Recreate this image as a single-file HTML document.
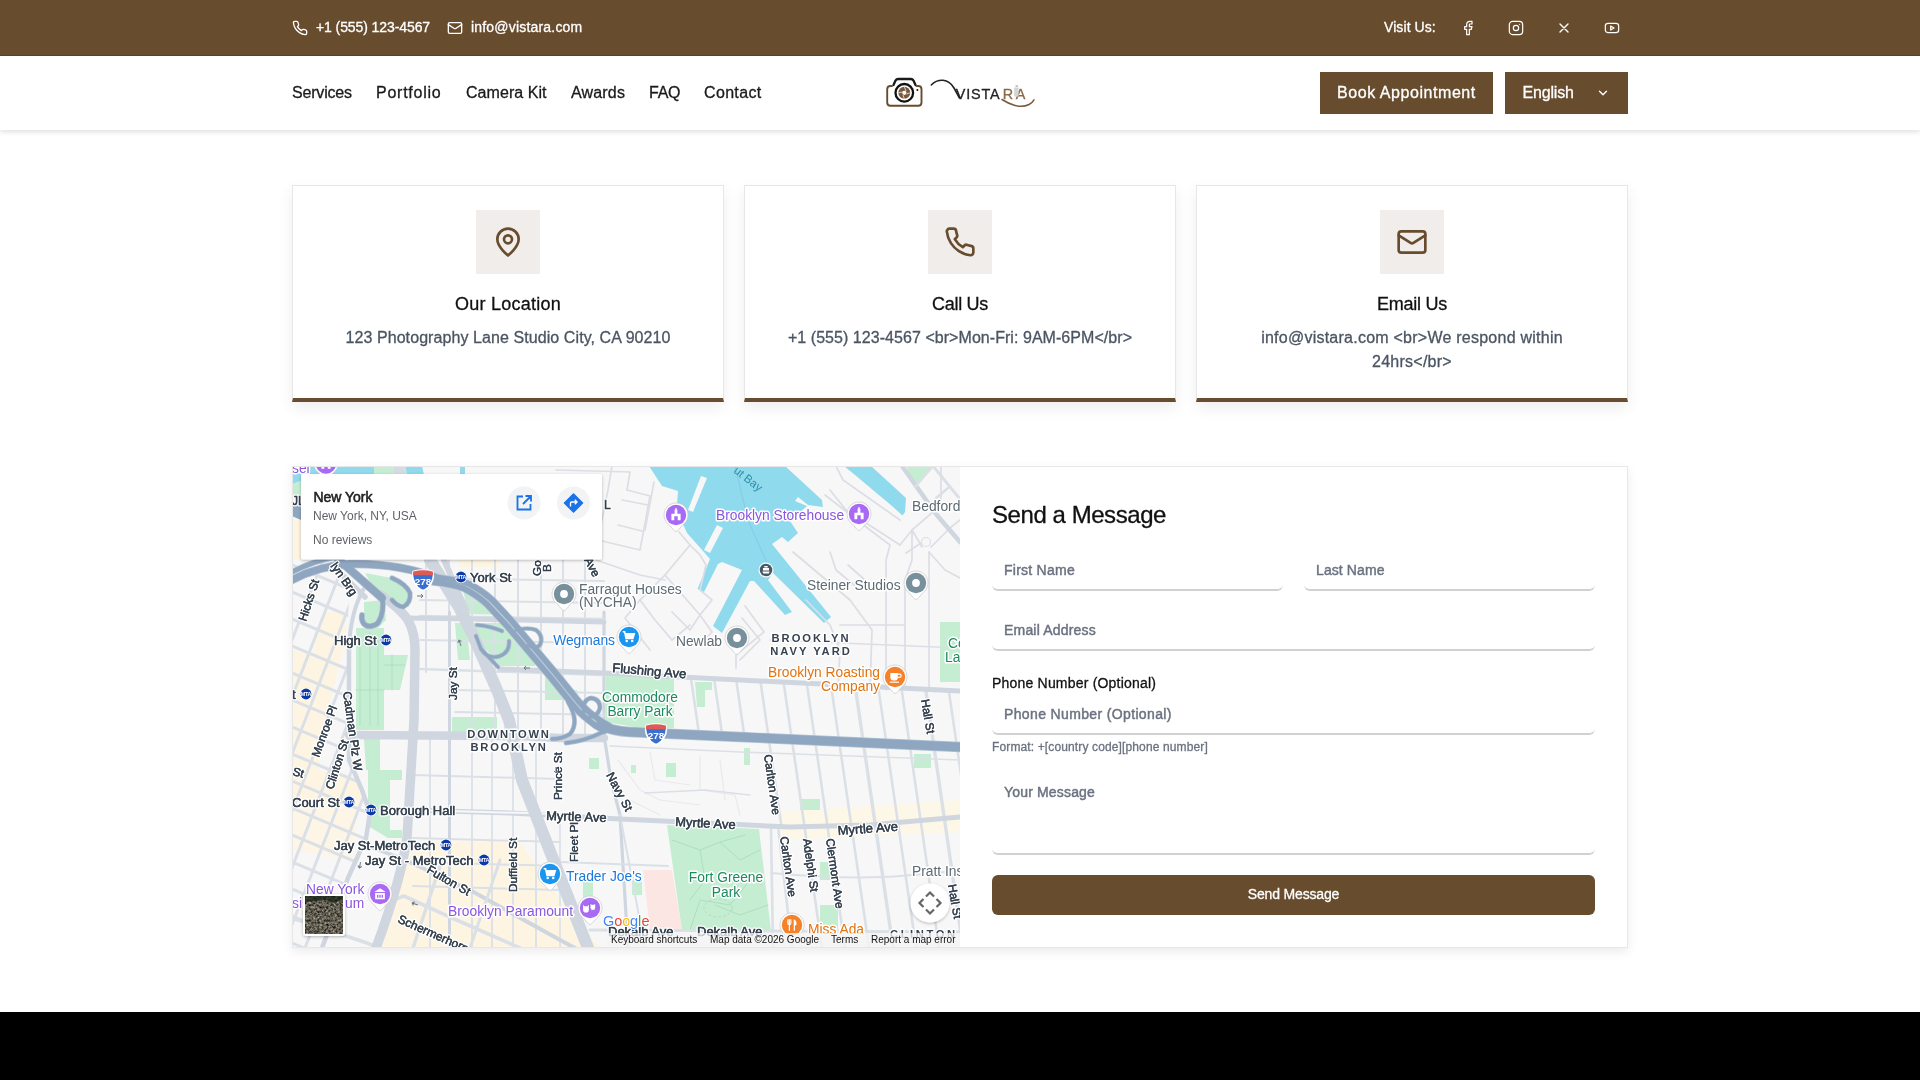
<!DOCTYPE html>
<html lang="en">
<head>
<meta charset="utf-8">
<title>Vistara - Contact</title>
<style>
*{box-sizing:border-box;margin:0;padding:0}
html,body{width:1920px;height:1080px;overflow:hidden;background:#fff}
body{font-family:"Liberation Sans",sans-serif;color:#111;position:relative;will-change:transform}
.abs{position:absolute;white-space:nowrap}
#topbar{position:absolute;left:0;top:0;width:1920px;height:56px;background:#684c2e;border-bottom:1px solid #5c4229;color:#fff;font-size:14px}
#topbar .t{position:absolute;top:0;height:56px;line-height:54px;white-space:nowrap}
#topbar svg{position:absolute}
#nav{position:absolute;left:0;top:56px;width:1920px;height:74px;background:#fff;box-shadow:0 2px 5px rgba(0,0,0,.13)}
#nav a{position:absolute;top:1px;height:74px;line-height:72px;font-size:16px;color:#1a1a1a;text-decoration:none;white-space:nowrap}
.btn{position:absolute;top:16px;height:42px;background:#684c2e;color:#fff;font-size:16px;line-height:42px;white-space:nowrap}
.card{position:absolute;top:185px;width:432px;height:217px;background:#fff;border:1px solid #e7e7e7;border-bottom:4px solid #684c2e;box-shadow:0 6px 14px rgba(0,0,0,.07)}
.card .ib{position:absolute;left:183px;top:24px;width:64px;height:64px;background:#f0edea}
.card .ib svg{position:absolute;left:16px;top:16px}
.card h3{position:absolute;left:0;width:430px;top:106px;text-align:center;font-size:18px;font-weight:400;line-height:24px;color:#111}
.card p{position:absolute;left:30px;width:370px;top:140px;text-align:center;font-size:16px;line-height:24px;color:#4b5563}
#sec{position:absolute;left:292px;top:466px;width:1336px;height:482px;background:#fff;border:1px solid #e7e7e7;box-shadow:0 4px 10px rgba(0,0,0,.08)}
#map{position:absolute;left:293px;top:467px;width:667px;height:480px;overflow:hidden}
#map svg{position:absolute;left:-1px;top:-1px}
#form h2{position:absolute;left:992px;top:499px;font-size:24px;font-weight:400;line-height:32px;color:#111;white-space:nowrap}
.inp{position:absolute;height:40px;margin-top:1px;border-bottom:2px solid #d1d1d1;border-radius:0 0 6px 6px;font-size:14px;font-weight:400;-webkit-text-stroke:.45px #6b7280;color:#6b7280;line-height:38px;padding-left:12px;white-space:nowrap}
#topbar .t,#nav a,.btn,.card h3,.card p,#form h2,#plabel,#phelp,#send{-webkit-text-stroke:.3px}
#footer{position:absolute;left:0;top:1012px;width:1920px;height:68px;background:#000}
</style>
</head>
<body>
<div id="topbar">
  <svg style="left:292px;top:20px" width="16" height="16" viewBox="0 0 24 24" fill="none" stroke="#fff" stroke-width="2" stroke-linecap="round" stroke-linejoin="round"><path d="M22 16.92v3a2 2 0 0 1-2.18 2 19.79 19.79 0 0 1-8.63-3.07 19.5 19.5 0 0 1-6-6 19.79 19.79 0 0 1-3.07-8.67A2 2 0 0 1 4.11 2h3a2 2 0 0 1 2 1.72 12.84 12.84 0 0 0 .7 2.81 2 2 0 0 1-.45 2.11L8.09 9.91a16 16 0 0 0 6 6l1.27-1.27a2 2 0 0 1 2.11-.45 12.84 12.84 0 0 0 2.81.7A2 2 0 0 1 22 16.92z"/></svg>
  <span class="t" id="tphone" style="left:316px;letter-spacing:-.09px">+1 (555) 123-4567</span>
  <svg style="left:447px;top:20px" width="16" height="16" viewBox="0 0 24 24" fill="none" stroke="#fff" stroke-width="2" stroke-linecap="round" stroke-linejoin="round"><rect x="2" y="4" width="20" height="16" rx="2"/><path d="m22 7-8.97 5.7a1.94 1.94 0 0 1-2.06 0L2 7"/></svg>
  <span class="t" id="tmail" style="left:471px;letter-spacing:.19px">info@vistara.com</span>
  <span class="t" id="tvisit" style="left:1384px;letter-spacing:.08px">Visit Us:</span>
  <svg style="left:1460px;top:20px" width="16" height="16" viewBox="0 0 24 24" fill="none" stroke="#fff" stroke-width="1.8" stroke-linecap="round" stroke-linejoin="round"><path d="M18 2h-3a5 5 0 0 0-5 5v3H7v4h3v8h4v-8h3l1-4h-4V7a1 1 0 0 1 1-1h3z"/></svg>
  <svg style="left:1508px;top:20px" width="16" height="16" viewBox="0 0 24 24" fill="none" stroke="#fff" stroke-width="1.8" stroke-linecap="round" stroke-linejoin="round"><rect x="2" y="2" width="20" height="20" rx="5"/><circle cx="12" cy="12" r="4"/><path d="M17.5 6.5h.01"/></svg>
  <svg style="left:1556px;top:20px" width="16" height="16" viewBox="0 0 24 24" fill="none" stroke="#fff" stroke-width="2" stroke-linecap="round" stroke-linejoin="round"><path d="M18 6 6 18M6 6l12 12"/></svg>
  <svg style="left:1604px;top:20px" width="16" height="16" viewBox="0 0 24 24" fill="none" stroke="#fff" stroke-width="1.8" stroke-linecap="round" stroke-linejoin="round"><rect x="2" y="5" width="20" height="14" rx="4"/><path d="m10 9 5 3-5 3z"/></svg>
</div>

<div id="nav">
  <a id="n1" style="left:292px;letter-spacing:-0.18px">Services</a>
  <a id="n2" style="left:376px;letter-spacing:0.75px">Portfolio</a>
  <a id="n3" style="left:466px;letter-spacing:0.05px">Camera Kit</a>
  <a id="n4" style="left:571px;letter-spacing:0.17px">Awards</a>
  <a id="n5" style="left:649px;letter-spacing:-0.25px">FAQ</a>
  <a id="n6" style="left:704px;letter-spacing:0.34px">Contact</a>
  <svg style="position:absolute;left:880px;top:14px" width="160" height="46" viewBox="880 70 160 46" font-family="Liberation Sans, sans-serif">
<path d="M893.5,85 L895.5,80.6 Q896.4,79 898.2,79 H910.8 Q912.6,79 913.5,80.6 L915.5,85" fill="none" stroke="#1a1a1a" stroke-width="2.3" stroke-linecap="round"/>
<path d="M892,86 H890.5 Q887.2,86 887.2,89.3 V102.5 Q887.2,105.8 890.5,105.8 H918.2 Q921.5,105.8 921.5,102.5 V89.3 Q921.5,86 918.2,86 H916.5" fill="none" stroke="#684c2e" stroke-width="1.9" stroke-linecap="round"/>
<circle cx="904.3" cy="92.8" r="8.8" fill="none" stroke="#111" stroke-width="2.3"/>
<circle cx="904.3" cy="92.8" r="6" fill="#7a5a3a"/>
<circle cx="904.3" cy="92.8" r="2.1" fill="#fff"/>
<path d="M904.3,86.8 L906,91 M910.3,92.8 L906.3,94 M904.3,98.8 L903,95 M898.3,92.8 L902.3,92" stroke="#fff" stroke-width=".7"/>
<circle cx="917.4" cy="90" r="1" fill="#111"/>
<path d="M931.3,85 Q936,80 943,80.3 Q950,81 954,88 L959.5,98" fill="none" stroke="#222" stroke-width="1.6" stroke-linecap="round"/>
<text x="955.8" y="98.6" font-size="14.4" fill="#222" stroke="#222" stroke-width=".3" letter-spacing=".8" id="lg1">VISTA</text>
<text x="1002.8" y="98.6" font-size="14.4" fill="#8a6a48" stroke="#8a6a48" stroke-width=".3" id="lg2">R</text>
<text x="1015.8" y="98.6" font-size="14.4" fill="#8a6a48" stroke="#8a6a48" stroke-width=".3" id="lg3">A</text>
<rect x="1014.2" y="87.5" width="4.4" height="9" fill="#d4d4d4"/>
<rect x="1015.5" y="85.2" width="2.6" height="1.6" fill="#bbb"/>
<path d="M1002,99.5 Q1009,104 1015,105.5 Q1023,107.5 1029,104.5 Q1032.5,102.5 1034,99.8" fill="none" stroke="#7a5a3a" stroke-width="1.5" stroke-linecap="round"/>
</svg>

  <div class="btn" id="book" style="left:1320px;width:173px;padding-left:17px;letter-spacing:.56px">Book Appointment</div>
  <div class="btn" id="lang" style="left:1505px;width:123px;padding-left:17.5px;letter-spacing:-.18px">English
    <svg style="position:absolute;left:91px;top:14px" width="14" height="14" viewBox="0 0 24 24" fill="none" stroke="#fff" stroke-width="2.4" stroke-linecap="round" stroke-linejoin="round"><path d="m6 9 6 6 6-6"/></svg>
  </div>
</div>

<div class="card" style="left:292px">
  <div class="ib"><svg width="32" height="32" viewBox="0 0 24 24" fill="none" stroke="#684c2e" stroke-width="2" stroke-linecap="round" stroke-linejoin="round"><path d="M20 10c0 6-8 12-8 12s-8-6-8-12a8 8 0 0 1 16 0Z"/><circle cx="12" cy="10" r="3"/></svg></div>
  <h3 style="letter-spacing:.23px">Our Location</h3>
  <p style="letter-spacing:.08px">123 Photography Lane Studio City, CA 90210</p>
</div>
<div class="card" style="left:744px">
  <div class="ib"><svg width="32" height="32" viewBox="0 0 24 24" fill="none" stroke="#684c2e" stroke-width="2" stroke-linecap="round" stroke-linejoin="round"><path d="M22 16.92v3a2 2 0 0 1-2.18 2 19.79 19.79 0 0 1-8.63-3.07 19.5 19.5 0 0 1-6-6 19.79 19.79 0 0 1-3.07-8.67A2 2 0 0 1 4.11 2h3a2 2 0 0 1 2 1.72 12.84 12.84 0 0 0 .7 2.81 2 2 0 0 1-.45 2.11L8.09 9.91a16 16 0 0 0 6 6l1.27-1.27a2 2 0 0 1 2.11-.45 12.84 12.84 0 0 0 2.81.7A2 2 0 0 1 22 16.92z"/></svg></div>
  <h3 style="letter-spacing:-.28px">Call Us</h3>
  <p style="letter-spacing:.05px">+1 (555) 123-4567 &lt;br&gt;Mon-Fri: 9AM-6PM&lt;/br&gt;</p>
</div>
<div class="card" style="left:1196px">
  <div class="ib"><svg width="32" height="32" viewBox="0 0 24 24" fill="none" stroke="#684c2e" stroke-width="2" stroke-linecap="round" stroke-linejoin="round"><rect x="2" y="4" width="20" height="16" rx="2"/><path d="m22 7-8.97 5.7a1.94 1.94 0 0 1-2.06 0L2 7"/></svg></div>
  <h3 style="letter-spacing:-.22px">Email Us</h3>
  <p style="left:40px;width:350px;letter-spacing:.24px">info@vistara.com &lt;br&gt;We respond within 24hrs&lt;/br&gt;</p>
</div>

<div id="sec"></div>
<div id="map">
<svg width="668" height="482" viewBox="292 466 668 482" font-family="Liberation Sans, sans-serif">
<rect x="292" y="466" width="668" height="482" fill="#f8f7f7"/>
<polygon points="324.0,612.0 346.0,612.0 346.0,640.0 330.0,700.0 318.0,770.0 360.0,780.0 362.0,800.0 292.0,800.0 292.0,650.0 312.0,655.0" fill="#fdf5e2" />
<polygon points="292.0,800.0 360.0,800.0 352.0,860.0 292.0,850.0" fill="#fdf6e6" />
<polygon points="420.0,842.0 520.0,842.0 560.0,900.0 600.0,948.0 380.0,948.0 395.0,900.0 412.0,850.0" fill="#fdf5e2" />
<polygon points="778.0,812.0 960.0,800.0 960.0,832.0 782.0,840.0" fill="#fdf7e8" />
<polygon points="459.0,560.0 499.0,560.0 499.0,567.0 459.0,567.0" fill="#fdf5e2" />
<polygon points="292.0,520.0 301.0,520.0 301.0,560.0 292.0,560.0" fill="#fdf5e2" />
<polygon points="356.0,628.0 384.0,628.0 384.0,655.0 408.0,655.0 400.0,690.0 384.0,690.0 384.0,730.0 356.0,730.0" fill="#c5edd2" />
<polygon points="364.0,739.0 380.0,739.0 380.0,770.0 366.0,770.0" fill="#c5edd2" />
<polygon points="368.0,770.0 402.0,770.0 402.0,838.0 388.0,838.0 368.0,826.0" fill="#c5edd2" />
<polygon points="390.0,780.0 402.0,780.0 402.0,830.0 390.0,830.0" fill="#f8f7f7" />
<polygon points="365.0,573.0 392.0,578.0 409.0,590.0 409.0,607.0 385.0,597.0 370.0,582.0" fill="#c5edd2" />
<polygon points="364.0,602.0 384.0,600.0 386.0,620.0 378.0,628.0 364.0,628.0" fill="#c5edd2" />
<polygon points="462.0,585.0 480.0,590.0 508.0,615.0 468.0,614.0" fill="#c5edd2" />
<polygon points="472.0,623.0 512.0,623.0 535.0,650.0 535.0,666.0 500.0,666.0 478.0,640.0" fill="#c5edd2" />
<polygon points="455.0,623.0 466.0,623.0 470.0,660.0 458.0,660.0" fill="#c5edd2" />
<polygon points="452.0,717.0 497.0,717.0 497.0,732.0 452.0,732.0" fill="#c5edd2" />
<polygon points="545.0,672.0 560.0,672.0 560.0,690.0 577.0,690.0 577.0,700.0 545.0,700.0" fill="#c5edd2" />
<polygon points="606.0,675.0 674.0,678.0 674.0,728.0 640.0,728.0 606.0,722.0" fill="#c5edd2" />
<polygon points="695.0,682.0 712.0,682.0 712.0,690.0 705.0,690.0 705.0,707.0 697.0,707.0" fill="#c5edd2" />
<polygon points="667.0,825.0 759.0,829.0 771.0,931.0 682.0,931.0" fill="#c5edd2" />
<polyline points="672.0,840.0 700.0,850.0 720.0,842.0 740.0,860.0 760.0,850.0" fill="none" stroke="#a9dcbc" stroke-width="0.9" stroke-linecap="round" stroke-linejoin="round" />
<polyline points="690.0,930.0 700.0,900.0 730.0,905.0 750.0,880.0 762.0,885.0" fill="none" stroke="#a9dcbc" stroke-width="0.9" stroke-linecap="round" stroke-linejoin="round" />
<polyline points="700.0,850.0 705.0,880.0 690.0,900.0" fill="none" stroke="#a9dcbc" stroke-width="0.9" stroke-linecap="round" stroke-linejoin="round" />
<polyline points="720.0,842.0 745.0,835.0" fill="none" stroke="#a9dcbc" stroke-width="0.9" stroke-linecap="round" stroke-linejoin="round" />
<polyline points="715.0,905.0 740.0,915.0 768.0,905.0" fill="none" stroke="#a9dcbc" stroke-width="0.9" stroke-linecap="round" stroke-linejoin="round" />
<ellipse cx="718" cy="908" rx="14" ry="9" fill="none" stroke="#a9dcbc" stroke-width=".9" stroke-dasharray="3 2"/>
<polyline points="360.0,640.0 360.0,725.0" fill="none" stroke="#a9dcbc" stroke-width="0.8" stroke-linecap="round" stroke-linejoin="round" />
<polyline points="370.0,632.0 370.0,725.0" fill="none" stroke="#a9dcbc" stroke-width="0.8" stroke-linecap="round" stroke-linejoin="round" />
<polyline points="378.0,640.0 378.0,725.0" fill="none" stroke="#a9dcbc" stroke-width="0.8" stroke-linecap="round" stroke-linejoin="round" />
<polyline points="356.0,690.0 384.0,690.0" fill="none" stroke="#a9dcbc" stroke-width="0.8" stroke-linecap="round" stroke-linejoin="round" />
<polyline points="384.0,665.0 405.0,665.0" fill="none" stroke="#a9dcbc" stroke-width="0.8" stroke-linecap="round" stroke-linejoin="round" />
<polyline points="392.0,655.0 392.0,690.0" fill="none" stroke="#a9dcbc" stroke-width="0.8" stroke-linecap="round" stroke-linejoin="round" />
<rect x="589" y="758" width="10" height="11" fill="#c5edd2"/>
<rect x="631" y="765" width="5" height="8" fill="#c5edd2"/>
<rect x="666" y="763" width="10" height="14" fill="#c5edd2"/>
<rect x="744" y="748" width="6" height="17" fill="#c5edd2"/>
<rect x="800" y="799" width="20" height="11" fill="#c5edd2"/>
<rect x="914" y="754" width="17" height="14" fill="#c5edd2"/>
<rect x="632" y="877" width="10" height="18" fill="#c5edd2"/>
<rect x="820" y="862" width="12" height="18" fill="#c5edd2"/>
<rect x="820" y="905" width="18" height="25" fill="#c5edd2"/>
<rect x="583" y="880" width="10" height="30" fill="#c5edd2"/>
<rect x="940" y="622" width="20" height="60" fill="#c5edd2"/>
<polygon points="906.0,466.0 933.0,466.0 915.0,487.0" fill="#c5edd2" />
<polygon points="643.0,870.0 672.0,870.0 682.0,930.0 650.0,930.0" fill="#fbe6e3" />
<polygon points="292.0,466.0 374.0,466.0 374.0,475.0 292.0,475.0" fill="#90daee" />
<polygon points="405.0,466.0 422.0,466.0 424.0,475.0 407.0,475.0" fill="#90daee" />
<polygon points="460.0,466.0 465.0,466.0 465.0,475.0 460.0,475.0" fill="#90daee" />
<polygon points="292.0,475.0 301.0,475.0 301.0,481.0 292.0,484.0" fill="#90daee" />
<polygon points="374.0,466.0 392.0,466.0 394.0,475.0 374.0,475.0" fill="#c5edd2" />
<polygon points="392.0,466.0 405.0,466.0 407.0,475.0 394.0,475.0" fill="#d5dbe2" />
<polygon points="292.0,484.0 301.0,481.0 301.0,497.0 292.0,497.0" fill="#c5edd2" />
<polygon points="292.0,506.0 301.0,503.0 301.0,520.0 292.0,516.0" fill="#8fa6c0" />
<polygon points="649.0,466.0 662.0,486.0 678.0,491.0 677.0,504.0 682.0,522.0 687.0,533.0 703.0,551.0 710.0,559.0 697.5,589.0 704.0,592.0 718.0,564.0 722.0,562.0 742.0,570.0 713.0,626.0 722.0,633.0 750.0,581.0 754.0,581.0 785.0,615.0 792.0,612.0 768.0,580.0 773.0,573.0 824.0,623.0 831.0,617.0 772.0,544.0 782.0,537.0 788.0,542.0 798.0,533.0 790.0,521.0 807.0,506.0 795.0,501.0 798.0,497.0 808.0,505.0 823.0,507.0 822.0,500.0 785.0,466.0" fill="#90daee" />
<polygon points="701.0,476.0 707.0,478.0 693.0,512.0 688.0,510.0" fill="#f8f7f7" />
<polygon points="717.0,525.0 723.0,528.0 710.0,553.0 704.0,550.0" fill="#f8f7f7" />
<polygon points="844.0,466.0 871.0,466.0 906.0,498.0 905.0,512.0 902.5,515.5 892.0,506.0 855.0,475.0" fill="#90daee" />
<polyline points="735.0,466.0 748.0,520.0 770.0,570.0" fill="none" stroke="#6fbfd6" stroke-width="0.5" stroke-linecap="round" stroke-linejoin="round" />
<polyline points="612.0,466.0 608.0,490.0 600.0,530.0 596.0,560.0 640.0,575.0 665.0,580.0" fill="none" stroke="#dcdee5" stroke-width="1.7" stroke-linecap="round" stroke-linejoin="round" />
<polyline points="556.0,470.0 630.0,472.0 627.0,490.0" fill="none" stroke="#dcdee5" stroke-width="1.7" stroke-linecap="round" stroke-linejoin="round" />
<polyline points="627.0,490.0 650.0,496.0 640.0,550.0 598.0,540.0" fill="none" stroke="#dcdee5" stroke-width="1.7" stroke-linecap="round" stroke-linejoin="round" />
<polyline points="654.0,482.0 645.0,530.0" fill="none" stroke="#dcdee5" stroke-width="1.7" stroke-linecap="round" stroke-linejoin="round" />
<polyline points="622.0,500.0 648.0,505.0" fill="none" stroke="#dcdee5" stroke-width="1.7" stroke-linecap="round" stroke-linejoin="round" />
<polyline points="618.0,525.0 642.0,531.0" fill="none" stroke="#dcdee5" stroke-width="1.7" stroke-linecap="round" stroke-linejoin="round" />
<polyline points="679.0,532.0 690.0,545.0 700.0,555.0 706.0,565.0 700.0,590.0 712.0,600.0 700.0,615.0" fill="none" stroke="#dcdee5" stroke-width="1.7" stroke-linecap="round" stroke-linejoin="round" />
<polyline points="690.0,545.0 665.0,575.0 640.0,600.0 655.0,620.0 672.0,640.0" fill="none" stroke="#dcdee5" stroke-width="1.7" stroke-linecap="round" stroke-linejoin="round" />
<polyline points="665.0,575.0 700.0,615.0 690.0,630.0 672.0,612.0" fill="none" stroke="#dcdee5" stroke-width="1.7" stroke-linecap="round" stroke-linejoin="round" />
<polyline points="700.0,615.0 712.0,632.0 700.0,645.0" fill="none" stroke="#dcdee5" stroke-width="1.7" stroke-linecap="round" stroke-linejoin="round" />
<polyline points="640.0,600.0 625.0,618.0 650.0,650.0" fill="none" stroke="#dcdee5" stroke-width="1.7" stroke-linecap="round" stroke-linejoin="round" />
<polyline points="672.0,640.0 690.0,625.0" fill="none" stroke="#dcdee5" stroke-width="1.7" stroke-linecap="round" stroke-linejoin="round" />
<polyline points="740.0,660.0 760.0,640.0 742.0,618.0" fill="none" stroke="#dcdee5" stroke-width="1.7" stroke-linecap="round" stroke-linejoin="round" />
<polyline points="736.0,668.0 736.0,655.0 764.0,632.0 745.0,606.0" fill="none" stroke="#dcdee5" stroke-width="1.7" stroke-linecap="round" stroke-linejoin="round" />
<polyline points="830.0,490.0 846.0,510.0 900.0,545.0 912.0,530.0 941.0,505.0 941.0,466.0" fill="none" stroke="#dcdee5" stroke-width="1.7" stroke-linecap="round" stroke-linejoin="round" />
<polyline points="825.0,495.0 870.0,530.0 890.0,545.0 886.0,560.0 886.0,690.0" fill="none" stroke="#dcdee5" stroke-width="1.7" stroke-linecap="round" stroke-linejoin="round" />
<polyline points="793.0,552.0 850.0,600.0 872.0,630.0 870.0,690.0" fill="none" stroke="#dcdee5" stroke-width="1.7" stroke-linecap="round" stroke-linejoin="round" />
<polyline points="806.0,600.0 830.0,625.0 840.0,650.0 838.0,690.0" fill="none" stroke="#dcdee5" stroke-width="1.7" stroke-linecap="round" stroke-linejoin="round" />
<polyline points="830.0,552.0 836.0,570.0 860.0,590.0" fill="none" stroke="#dcdee5" stroke-width="1.7" stroke-linecap="round" stroke-linejoin="round" />
<polyline points="848.0,565.0 865.0,580.0" fill="none" stroke="#dcdee5" stroke-width="1.7" stroke-linecap="round" stroke-linejoin="round" />
<polyline points="912.0,530.0 912.0,560.0 905.0,580.0 905.0,690.0" fill="none" stroke="#dcdee5" stroke-width="1.7" stroke-linecap="round" stroke-linejoin="round" />
<polyline points="912.0,530.0 918.0,540.0 922.0,547.0" fill="none" stroke="#dcdee5" stroke-width="1.7" stroke-linecap="round" stroke-linejoin="round" />
<polyline points="931.0,547.0 950.0,528.0 960.0,520.0" fill="none" stroke="#dcdee5" stroke-width="1.7" stroke-linecap="round" stroke-linejoin="round" />
<polyline points="929.0,690.0 929.0,552.0" fill="none" stroke="#dcdee5" stroke-width="1.7" stroke-linecap="round" stroke-linejoin="round" />
<polyline points="906.0,553.0 921.0,543.0" fill="none" stroke="#dcdee5" stroke-width="1.7" stroke-linecap="round" stroke-linejoin="round" />
<polyline points="929.0,552.0 945.0,570.0 960.0,578.0" fill="none" stroke="#dcdee5" stroke-width="1.7" stroke-linecap="round" stroke-linejoin="round" />
<polyline points="836.0,466.0 843.0,480.0 900.0,520.0" fill="none" stroke="#dcdee5" stroke-width="1.7" stroke-linecap="round" stroke-linejoin="round" />
<polyline points="770.0,640.0 960.0,648.0" fill="none" stroke="#dcdee5" stroke-width="1.7" stroke-linecap="round" stroke-linejoin="round" />
<polyline points="840.0,625.0 905.0,625.0" fill="none" stroke="#dcdee5" stroke-width="1.7" stroke-linecap="round" stroke-linejoin="round" />
<circle cx="926" cy="542" r="4.5" fill="#f8f7f7" stroke="#dcdee5" stroke-width="1.1"/>
<polyline points="902.0,466.0 936.0,514.0 960.0,542.0" fill="none" stroke="#cfd6df" stroke-width="4.5" stroke-linecap="round" stroke-linejoin="round" />
<polyline points="933.0,466.0 960.0,499.0" fill="none" stroke="#dbe0e7" stroke-width="3" stroke-linecap="round" stroke-linejoin="round" />
<polyline points="915.0,487.0 933.0,466.0" fill="none" stroke="#dbe0e7" stroke-width="2.5" stroke-linecap="round" stroke-linejoin="round" />
<polyline points="935.0,499.0 948.0,488.0" fill="none" stroke="#dbe0e7" stroke-width="2.5" stroke-linecap="round" stroke-linejoin="round" />
<polyline points="691.2,679.7 699.2,735.0" fill="none" stroke="#dbe0e7" stroke-width="2.6" stroke-linecap="round" stroke-linejoin="round" />
<polyline points="714.4,680.7 722.2,735.0" fill="none" stroke="#dbe0e7" stroke-width="2.6" stroke-linecap="round" stroke-linejoin="round" />
<polyline points="736.5,681.7 744.2,735.0" fill="none" stroke="#dbe0e7" stroke-width="2.6" stroke-linecap="round" stroke-linejoin="round" />
<polyline points="760.7,682.8 781.7,828.0" fill="none" stroke="#dbe0e7" stroke-width="2.6" stroke-linecap="round" stroke-linejoin="round" />
<polyline points="771.0,828.0 773.0,948.0" fill="none" stroke="#dbe0e7" stroke-width="2.6" stroke-linecap="round" stroke-linejoin="round" />
<polyline points="783.8,683.8 822.1,948.0" fill="none" stroke="#dbe0e7" stroke-width="2.6" stroke-linecap="round" stroke-linejoin="round" />
<polyline points="807.0,684.9 845.1,948.0" fill="none" stroke="#dbe0e7" stroke-width="2.6" stroke-linecap="round" stroke-linejoin="round" />
<polyline points="831.1,685.9 869.1,948.0" fill="none" stroke="#dbe0e7" stroke-width="2.6" stroke-linecap="round" stroke-linejoin="round" />
<polyline points="855.3,687.0 893.1,948.0" fill="none" stroke="#dbe0e7" stroke-width="3.4" stroke-linecap="round" stroke-linejoin="round" />
<polyline points="878.4,688.1 916.1,948.0" fill="none" stroke="#dbe0e7" stroke-width="2.6" stroke-linecap="round" stroke-linejoin="round" />
<polyline points="901.6,689.1 939.1,948.0" fill="none" stroke="#dbe0e7" stroke-width="2.6" stroke-linecap="round" stroke-linejoin="round" />
<polyline points="925.8,690.2 963.1,948.0" fill="none" stroke="#dbe0e7" stroke-width="3.4" stroke-linecap="round" stroke-linejoin="round" />
<polyline points="948.9,691.2 986.1,948.0" fill="none" stroke="#dbe0e7" stroke-width="2.6" stroke-linecap="round" stroke-linejoin="round" />
<polyline points="792.0,948.0 778.5,830.0" fill="none" stroke="#dbe0e7" stroke-width="2.6" stroke-linecap="round" stroke-linejoin="round" />
<path d="M771,873 Q850,880 900,876 T960,870" fill="none" stroke="#dbe0e7" stroke-width="2" stroke-linecap="round" stroke-linejoin="round" />
<polyline points="590.0,930.0 960.0,932.0" fill="none" stroke="#dbe0e7" stroke-width="3" stroke-linecap="round" stroke-linejoin="round" />
<polyline points="610.0,746.0 740.0,752.0 960.0,760.0" fill="none" stroke="#dbe0e7" stroke-width="1.6" stroke-linecap="round" stroke-linejoin="round" />
<polyline points="618.0,760.0 640.0,790.0 660.0,800.0 700.0,805.0" fill="none" stroke="#e9e9ee" stroke-width="1.2" stroke-linecap="round" stroke-linejoin="round" />
<polyline points="700.0,756.0 700.0,790.0 735.0,795.0 740.0,815.0" fill="none" stroke="#e9e9ee" stroke-width="1.2" stroke-linecap="round" stroke-linejoin="round" />
<polyline points="650.0,752.0 655.0,780.0 690.0,785.0" fill="none" stroke="#e9e9ee" stroke-width="1.2" stroke-linecap="round" stroke-linejoin="round" />
<polyline points="720.0,760.0 725.0,800.0" fill="none" stroke="#e9e9ee" stroke-width="1.2" stroke-linecap="round" stroke-linejoin="round" />
<polyline points="630.0,800.0 660.0,815.0" fill="none" stroke="#e9e9ee" stroke-width="1.2" stroke-linecap="round" stroke-linejoin="round" />
<polyline points="645.0,793.0 705.0,790.0 750.0,795.0" fill="none" stroke="#dbe0e7" stroke-width="1.6" stroke-linecap="round" stroke-linejoin="round" />
<polyline points="604.0,612.0 604.0,735.0 611.0,780.0 620.0,815.0 628.0,948.0" fill="none" stroke="#cfd6df" stroke-width="3.2" stroke-linecap="round" stroke-linejoin="round" />
<polyline points="620.0,815.0 645.0,948.0" fill="none" stroke="#dbe0e7" stroke-width="2" stroke-linecap="round" stroke-linejoin="round" />
<polyline points="560.0,862.0 668.0,866.0" fill="none" stroke="#dbe0e7" stroke-width="2" stroke-linecap="round" stroke-linejoin="round" />
<polyline points="560.0,817.0 560.0,948.0" fill="none" stroke="#dbe0e7" stroke-width="1.6" stroke-linecap="round" stroke-linejoin="round" />
<polyline points="420.0,578.0 604.0,581.0" fill="none" stroke="#dbe0e7" stroke-width="2" stroke-linecap="round" stroke-linejoin="round" />
<polyline points="420.0,600.0 604.0,603.0" fill="none" stroke="#dbe0e7" stroke-width="2" stroke-linecap="round" stroke-linejoin="round" />
<polyline points="420.0,616.0 604.0,619.0" fill="none" stroke="#dbe0e7" stroke-width="2.4" stroke-linecap="round" stroke-linejoin="round" />
<polyline points="420.0,640.0 604.0,643.0" fill="none" stroke="#dbe0e7" stroke-width="2" stroke-linecap="round" stroke-linejoin="round" />
<polyline points="420.0,669.0 604.0,675.0" fill="none" stroke="#dbe0e7" stroke-width="2.4" stroke-linecap="round" stroke-linejoin="round" />
<polyline points="426.0,560.0 426.0,672.0" fill="none" stroke="#dbe0e7" stroke-width="2" stroke-linecap="round" stroke-linejoin="round" />
<polyline points="449.0,560.0 449.0,672.0" fill="none" stroke="#dbe0e7" stroke-width="2" stroke-linecap="round" stroke-linejoin="round" />
<polyline points="472.0,560.0 472.0,672.0" fill="none" stroke="#dbe0e7" stroke-width="2" stroke-linecap="round" stroke-linejoin="round" />
<polyline points="495.0,560.0 495.0,672.0" fill="none" stroke="#dbe0e7" stroke-width="2" stroke-linecap="round" stroke-linejoin="round" />
<polyline points="518.0,560.0 518.0,672.0" fill="none" stroke="#dbe0e7" stroke-width="2" stroke-linecap="round" stroke-linejoin="round" />
<polyline points="541.0,560.0 541.0,672.0" fill="none" stroke="#dbe0e7" stroke-width="2" stroke-linecap="round" stroke-linejoin="round" />
<polyline points="563.0,560.0 563.0,672.0" fill="none" stroke="#dbe0e7" stroke-width="2" stroke-linecap="round" stroke-linejoin="round" />
<polyline points="585.0,560.0 585.0,672.0" fill="none" stroke="#dbe0e7" stroke-width="2" stroke-linecap="round" stroke-linejoin="round" />
<polyline points="455.0,690.0 604.0,693.0" fill="none" stroke="#dbe0e7" stroke-width="2" stroke-linecap="round" stroke-linejoin="round" />
<polyline points="455.0,712.0 604.0,715.0" fill="none" stroke="#dbe0e7" stroke-width="2" stroke-linecap="round" stroke-linejoin="round" />
<polyline points="472.0,672.0 472.0,735.0" fill="none" stroke="#dbe0e7" stroke-width="2" stroke-linecap="round" stroke-linejoin="round" />
<polyline points="495.0,672.0 495.0,735.0" fill="none" stroke="#dbe0e7" stroke-width="2" stroke-linecap="round" stroke-linejoin="round" />
<polyline points="518.0,672.0 518.0,735.0" fill="none" stroke="#dbe0e7" stroke-width="2" stroke-linecap="round" stroke-linejoin="round" />
<polyline points="541.0,672.0 541.0,735.0" fill="none" stroke="#dbe0e7" stroke-width="2" stroke-linecap="round" stroke-linejoin="round" />
<polyline points="563.0,672.0 563.0,735.0" fill="none" stroke="#dbe0e7" stroke-width="2" stroke-linecap="round" stroke-linejoin="round" />
<polyline points="585.0,672.0 585.0,735.0" fill="none" stroke="#dbe0e7" stroke-width="2" stroke-linecap="round" stroke-linejoin="round" />
<polyline points="413.0,775.0 560.0,779.0" fill="none" stroke="#dbe0e7" stroke-width="2" stroke-linecap="round" stroke-linejoin="round" />
<polyline points="413.0,810.0 560.0,814.0" fill="none" stroke="#dbe0e7" stroke-width="2" stroke-linecap="round" stroke-linejoin="round" />
<polyline points="413.0,838.0 560.0,842.0" fill="none" stroke="#dbe0e7" stroke-width="2" stroke-linecap="round" stroke-linejoin="round" />
<polyline points="413.0,862.0 560.0,866.0" fill="none" stroke="#dbe0e7" stroke-width="2" stroke-linecap="round" stroke-linejoin="round" />
<polyline points="413.0,886.0 560.0,890.0" fill="none" stroke="#dbe0e7" stroke-width="2" stroke-linecap="round" stroke-linejoin="round" />
<polyline points="430.0,738.0 430.0,948.0" fill="none" stroke="#dbe0e7" stroke-width="1.8" stroke-linecap="round" stroke-linejoin="round" />
<polyline points="472.0,738.0 472.0,948.0" fill="none" stroke="#dbe0e7" stroke-width="1.8" stroke-linecap="round" stroke-linejoin="round" />
<polyline points="492.0,738.0 492.0,948.0" fill="none" stroke="#dbe0e7" stroke-width="1.8" stroke-linecap="round" stroke-linejoin="round" />
<polyline points="513.0,738.0 513.0,948.0" fill="none" stroke="#dbe0e7" stroke-width="1.8" stroke-linecap="round" stroke-linejoin="round" />
<polyline points="536.0,738.0 536.0,948.0" fill="none" stroke="#dbe0e7" stroke-width="1.8" stroke-linecap="round" stroke-linejoin="round" />
<polyline points="449.5,612.0 449.5,948.0" fill="none" stroke="#cfd6df" stroke-width="3" stroke-linecap="round" stroke-linejoin="round" />
<defs><clipPath id="bh"><polygon points="292,560 330,560 338,572 349,600 347,640 347,760 364,800 366,840 340,900 325,948 292,948"/></clipPath></defs>
<g clip-path="url(#bh)">
<polyline points="292.0,484.0 392.0,526.0" fill="none" stroke="#dbe0e7" stroke-width="3" stroke-linecap="round" stroke-linejoin="round" />
<polyline points="292.0,511.0 392.0,553.0" fill="none" stroke="#dbe0e7" stroke-width="3" stroke-linecap="round" stroke-linejoin="round" />
<polyline points="292.0,538.0 392.0,580.0" fill="none" stroke="#dbe0e7" stroke-width="3" stroke-linecap="round" stroke-linejoin="round" />
<polyline points="292.0,565.0 392.0,607.0" fill="none" stroke="#dbe0e7" stroke-width="3" stroke-linecap="round" stroke-linejoin="round" />
<polyline points="292.0,592.0 392.0,634.0" fill="none" stroke="#dbe0e7" stroke-width="3" stroke-linecap="round" stroke-linejoin="round" />
<polyline points="292.0,619.0 392.0,661.0" fill="none" stroke="#dbe0e7" stroke-width="3" stroke-linecap="round" stroke-linejoin="round" />
<polyline points="292.0,646.0 392.0,688.0" fill="none" stroke="#dbe0e7" stroke-width="3" stroke-linecap="round" stroke-linejoin="round" />
<polyline points="292.0,673.0 392.0,715.0" fill="none" stroke="#dbe0e7" stroke-width="3" stroke-linecap="round" stroke-linejoin="round" />
<polyline points="292.0,700.0 392.0,742.0" fill="none" stroke="#dbe0e7" stroke-width="3" stroke-linecap="round" stroke-linejoin="round" />
<polyline points="292.0,727.0 392.0,769.0" fill="none" stroke="#dbe0e7" stroke-width="3" stroke-linecap="round" stroke-linejoin="round" />
<polyline points="292.0,754.0 392.0,796.0" fill="none" stroke="#dbe0e7" stroke-width="3" stroke-linecap="round" stroke-linejoin="round" />
<polyline points="292.0,781.0 392.0,823.0" fill="none" stroke="#dbe0e7" stroke-width="3" stroke-linecap="round" stroke-linejoin="round" />
<polyline points="292.0,808.0 392.0,850.0" fill="none" stroke="#dbe0e7" stroke-width="3" stroke-linecap="round" stroke-linejoin="round" />
<polyline points="292.0,835.0 392.0,877.0" fill="none" stroke="#dbe0e7" stroke-width="3" stroke-linecap="round" stroke-linejoin="round" />
<polyline points="292.0,862.0 392.0,904.0" fill="none" stroke="#dbe0e7" stroke-width="3" stroke-linecap="round" stroke-linejoin="round" />
<polyline points="292.0,889.0 392.0,931.0" fill="none" stroke="#dbe0e7" stroke-width="3" stroke-linecap="round" stroke-linejoin="round" />
<polyline points="292.0,916.0 392.0,958.0" fill="none" stroke="#dbe0e7" stroke-width="3" stroke-linecap="round" stroke-linejoin="round" />
<polyline points="292.0,943.0 392.0,985.0" fill="none" stroke="#dbe0e7" stroke-width="3" stroke-linecap="round" stroke-linejoin="round" />
<polyline points="292.0,970.0 392.0,1012.0" fill="none" stroke="#dbe0e7" stroke-width="3" stroke-linecap="round" stroke-linejoin="round" />
<polyline points="292.0,997.0 392.0,1039.0" fill="none" stroke="#dbe0e7" stroke-width="3" stroke-linecap="round" stroke-linejoin="round" />
<polyline points="292.0,1024.0 392.0,1066.0" fill="none" stroke="#dbe0e7" stroke-width="3" stroke-linecap="round" stroke-linejoin="round" />
<polyline points="323.0,560.0 173.0,948.0" fill="none" stroke="#dbe0e7" stroke-width="3" stroke-linecap="round" stroke-linejoin="round" />
<polyline points="345.0,560.0 195.0,948.0" fill="none" stroke="#dbe0e7" stroke-width="3" stroke-linecap="round" stroke-linejoin="round" />
<polyline points="367.0,560.0 217.0,948.0" fill="none" stroke="#dbe0e7" stroke-width="3" stroke-linecap="round" stroke-linejoin="round" />
<polyline points="389.0,560.0 239.0,948.0" fill="none" stroke="#dbe0e7" stroke-width="3" stroke-linecap="round" stroke-linejoin="round" />
<polyline points="411.0,560.0 261.0,948.0" fill="none" stroke="#dbe0e7" stroke-width="3" stroke-linecap="round" stroke-linejoin="round" />
<polyline points="433.0,560.0 283.0,948.0" fill="none" stroke="#dbe0e7" stroke-width="3" stroke-linecap="round" stroke-linejoin="round" />
<polyline points="455.0,560.0 305.0,948.0" fill="none" stroke="#dbe0e7" stroke-width="3" stroke-linecap="round" stroke-linejoin="round" />
</g>
<polyline points="366.0,845.0 405.0,860.0 470.0,890.0 560.0,940.0 575.0,948.0" fill="none" stroke="#cfd6df" stroke-width="4" stroke-linecap="round" stroke-linejoin="round" />
<polyline points="380.0,905.0 404.0,896.0 452.0,918.0 520.0,948.0" fill="none" stroke="#dbe0e7" stroke-width="3.6" stroke-linecap="round" stroke-linejoin="round" />
<polyline points="292.0,918.0 367.0,943.0 380.0,948.0" fill="none" stroke="#dbe0e7" stroke-width="3.6" stroke-linecap="round" stroke-linejoin="round" />
<polyline points="442.0,860.0 413.0,948.0" fill="none" stroke="#dbe0e7" stroke-width="3.4" stroke-linecap="round" stroke-linejoin="round" />
<polyline points="470.0,948.0 500.0,860.0" fill="none" stroke="#dbe0e7" stroke-width="3" stroke-linecap="round" stroke-linejoin="round" />
<polyline points="500.0,669.0 604.0,673.0 740.0,680.0 960.0,691.0" fill="none" stroke="#cfd6df" stroke-width="5" stroke-linecap="round" stroke-linejoin="round" />
<polyline points="413.0,810.0 510.0,813.0 620.0,819.0 790.0,827.0 870.0,825.0 960.0,817.0" fill="none" stroke="#cfd6df" stroke-width="5" stroke-linecap="round" stroke-linejoin="round" />
<polyline points="413.0,810.0 560.0,814.0" fill="none" stroke="#f8f7f7" stroke-width="2" stroke-linecap="round" stroke-linejoin="round" />
<polyline points="349.0,735.0 520.0,736.0 560.0,738.0 604.0,738.0" fill="none" stroke="#cfd6df" stroke-width="8.5" stroke-linecap="round" stroke-linejoin="round" />
<polyline points="408.0,618.0 470.0,619.0 604.0,622.0" fill="none" stroke="#cfd6df" stroke-width="5" stroke-linecap="round" stroke-linejoin="round" />
<polyline points="349.0,640.0 349.0,760.0 362.0,790.0 370.0,813.0 366.0,838.0 348.0,878.0 322.0,948.0" fill="none" stroke="#cfd6df" stroke-width="4.5" stroke-linecap="round" stroke-linejoin="round" />
<path d="M349,650 Q350,610 366,585" fill="none" stroke="#cfd6df" stroke-width="4" stroke-linecap="round" stroke-linejoin="round" />
<path d="M381,595 Q404,612 409,622 Q415,634 415,650 L414,720 L407,838 Q401,880 376,948" fill="none" stroke="#cfd6df" stroke-width="9.5" stroke-linecap="round" stroke-linejoin="round" />
<polyline points="337.0,570.0 365.0,597.0" fill="none" stroke="#cfd6df" stroke-width="5.5" stroke-linecap="round" stroke-linejoin="round" />
<path d="M430,560 L459,607 L472,633 L497,690 L509,720 L522,780 L588,948" fill="none" stroke="#cfd6df" stroke-width="12" stroke-linecap="round" stroke-linejoin="round" />
<path d="M444,560 L466,610" fill="none" stroke="#cfd6df" stroke-width="6" stroke-linecap="round" stroke-linejoin="round" />
<path d="M600,725 Q612,731 630,732 L740,737 L960,747" fill="none" stroke="#b4c3d5" stroke-width="10.4" stroke-linecap="round" stroke-linejoin="round" />
<path d="M292,580 Q318,566 350,564 Q400,563 440,579" fill="none" stroke="#b4c3d5" stroke-width="8.4" stroke-linecap="round" stroke-linejoin="round" />
<path d="M292,572 Q315,560 340,556" fill="none" stroke="#b4c3d5" stroke-width="5.9" stroke-linecap="round" stroke-linejoin="round" />
<path d="M436,580 Q455,582 466,586 Q480,593 490,602.5 L509,623 L531,649 L553,675 L574,701 Q582,711 590,717 Q598,724 607,728.5" fill="none" stroke="#b4c3d5" stroke-width="7.0" stroke-linecap="round" stroke-linejoin="round" transform="translate(2.6,-2.3)"/>
<path d="M436,580 Q455,582 466,586 Q480,593 490,602.5 L509,623 L531,649 L553,675 L574,701 Q582,711 590,717 Q598,724 607,728.5" fill="none" stroke="#b4c3d5" stroke-width="7.0" stroke-linecap="round" stroke-linejoin="round" transform="translate(-2.6,2.3)"/>
<path d="M338,559 L382,598" fill="none" stroke="#b4c3d5" stroke-width="8.9" stroke-linecap="round" stroke-linejoin="round" />
<path d="M392,578 Q406,584 410,593 Q411,603 403,607 Q397,606 392,600" fill="none" stroke="#b4c3d5" stroke-width="5.199999999999999" stroke-linecap="round" stroke-linejoin="round" />
<path d="M382,596 Q385,612 378,623 Q370,629 364,624 Q361,620 362,615" fill="none" stroke="#b4c3d5" stroke-width="5.800000000000001" stroke-linecap="round" stroke-linejoin="round" />
<path d="M477,625 Q490,626 502,631" fill="none" stroke="#b4c3d5" stroke-width="4.6" stroke-linecap="round" stroke-linejoin="round" />
<path d="M509,641 Q510,652 500,656 Q488,660 481,649 L476,636" fill="none" stroke="#b4c3d5" stroke-width="4.6" stroke-linecap="round" stroke-linejoin="round" />
<path d="M481,649 L498,667" fill="none" stroke="#b4c3d5" stroke-width="4.6" stroke-linecap="round" stroke-linejoin="round" />
<path d="M516,630 Q528,627 536,630 Q544,636 540,645 Q535,650 528,645" fill="none" stroke="#b4c3d5" stroke-width="4.6" stroke-linecap="round" stroke-linejoin="round" />
<path d="M568,702 Q580,722 570,734 Q562,739 552,739" fill="none" stroke="#b4c3d5" stroke-width="4.8" stroke-linecap="round" stroke-linejoin="round" />
<path d="M603,732 Q585,741 566,743" fill="none" stroke="#b4c3d5" stroke-width="4.8" stroke-linecap="round" stroke-linejoin="round" />
<path d="M584,712 Q582,700 591,698 Q600,699 600,708 Q598,716 590,717" fill="none" stroke="#b4c3d5" stroke-width="4.8" stroke-linecap="round" stroke-linejoin="round" />
<path d="M600,725 Q612,731 630,732 L740,737 L960,747" fill="none" stroke="#8fa6c0" stroke-width="9" stroke-linecap="round" stroke-linejoin="round" />
<path d="M292,580 Q318,566 350,564 Q400,563 440,579" fill="none" stroke="#8fa6c0" stroke-width="7" stroke-linecap="round" stroke-linejoin="round" />
<path d="M292,572 Q315,560 340,556" fill="none" stroke="#8fa6c0" stroke-width="4.5" stroke-linecap="round" stroke-linejoin="round" />
<path d="M436,580 Q455,582 466,586 Q480,593 490,602.5 L509,623 L531,649 L553,675 L574,701 Q582,711 590,717 Q598,724 607,728.5" fill="none" stroke="#8fa6c0" stroke-width="5.6" stroke-linecap="round" stroke-linejoin="round" transform="translate(2.6,-2.3)"/>
<path d="M436,580 Q455,582 466,586 Q480,593 490,602.5 L509,623 L531,649 L553,675 L574,701 Q582,711 590,717 Q598,724 607,728.5" fill="none" stroke="#8fa6c0" stroke-width="5.6" stroke-linecap="round" stroke-linejoin="round" transform="translate(-2.6,2.3)"/>
<path d="M338,559 L382,598" fill="none" stroke="#8fa6c0" stroke-width="7.5" stroke-linecap="round" stroke-linejoin="round" />
<path d="M392,578 Q406,584 410,593 Q411,603 403,607 Q397,606 392,600" fill="none" stroke="#8fa6c0" stroke-width="3.8" stroke-linecap="round" stroke-linejoin="round" />
<path d="M382,596 Q385,612 378,623 Q370,629 364,624 Q361,620 362,615" fill="none" stroke="#8fa6c0" stroke-width="4.4" stroke-linecap="round" stroke-linejoin="round" />
<path d="M477,625 Q490,626 502,631" fill="none" stroke="#8fa6c0" stroke-width="3.2" stroke-linecap="round" stroke-linejoin="round" />
<path d="M509,641 Q510,652 500,656 Q488,660 481,649 L476,636" fill="none" stroke="#8fa6c0" stroke-width="3.2" stroke-linecap="round" stroke-linejoin="round" />
<path d="M481,649 L498,667" fill="none" stroke="#8fa6c0" stroke-width="3.2" stroke-linecap="round" stroke-linejoin="round" />
<path d="M516,630 Q528,627 536,630 Q544,636 540,645 Q535,650 528,645" fill="none" stroke="#8fa6c0" stroke-width="3.2" stroke-linecap="round" stroke-linejoin="round" />
<path d="M568,702 Q580,722 570,734 Q562,739 552,739" fill="none" stroke="#8fa6c0" stroke-width="3.4" stroke-linecap="round" stroke-linejoin="round" />
<path d="M603,732 Q585,741 566,743" fill="none" stroke="#8fa6c0" stroke-width="3.4" stroke-linecap="round" stroke-linejoin="round" />
<path d="M584,712 Q582,700 591,698 Q600,699 600,708 Q598,716 590,717" fill="none" stroke="#8fa6c0" stroke-width="3.4" stroke-linecap="round" stroke-linejoin="round" />
<text x="470" y="581.5" font-size="13" fill="#36424f" text-anchor="start" stroke="#fff" stroke-width="3" stroke-linejoin="round" paint-order="stroke"  >York St</text>
<text x="470" y="581.5" font-size="13" fill="#36424f" stroke="#36424f" stroke-width=".4" text-anchor="start"  >York St</text>
<text x="334" y="645" font-size="13" fill="#36424f" text-anchor="start" stroke="#fff" stroke-width="3" stroke-linejoin="round" paint-order="stroke"  >High St</text>
<text x="334" y="645" font-size="13" fill="#36424f" stroke="#36424f" stroke-width=".4" text-anchor="start"  >High St</text>
<text x="292" y="806.5" font-size="13" fill="#36424f" text-anchor="start" stroke="#fff" stroke-width="3" stroke-linejoin="round" paint-order="stroke"  >Court St</text>
<text x="292" y="806.5" font-size="13" fill="#36424f" stroke="#36424f" stroke-width=".4" text-anchor="start"  >Court St</text>
<text x="380" y="814.5" font-size="13" fill="#36424f" text-anchor="start" stroke="#fff" stroke-width="3" stroke-linejoin="round" paint-order="stroke"  >Borough Hall</text>
<text x="380" y="814.5" font-size="13" fill="#36424f" stroke="#36424f" stroke-width=".4" text-anchor="start"  >Borough Hall</text>
<text x="334" y="849.5" font-size="13" fill="#36424f" text-anchor="start" stroke="#fff" stroke-width="3" stroke-linejoin="round" paint-order="stroke"  >Jay St-MetroTech</text>
<text x="334" y="849.5" font-size="13" fill="#36424f" stroke="#36424f" stroke-width=".4" text-anchor="start"  >Jay St-MetroTech</text>
<text x="365" y="864.5" font-size="13" fill="#36424f" text-anchor="start" stroke="#fff" stroke-width="3" stroke-linejoin="round" paint-order="stroke"  >Jay St - MetroTech</text>
<text x="365" y="864.5" font-size="13" fill="#36424f" stroke="#36424f" stroke-width=".4" text-anchor="start"  >Jay St - MetroTech</text>
<text x="612" y="672" font-size="13" fill="#36424f" text-anchor="start" stroke="#fff" stroke-width="3" stroke-linejoin="round" paint-order="stroke"  transform="rotate(5 612 672)" >Flushing Ave</text>
<text x="612" y="672" font-size="13" fill="#36424f" stroke="#36424f" stroke-width=".4" text-anchor="start"  transform="rotate(5 612 672)" >Flushing Ave</text>
<text x="546" y="820" font-size="13" fill="#36424f" text-anchor="start" stroke="#fff" stroke-width="3" stroke-linejoin="round" paint-order="stroke"  transform="rotate(2 546 820)" >Myrtle Ave</text>
<text x="546" y="820" font-size="13" fill="#36424f" stroke="#36424f" stroke-width=".4" text-anchor="start"  transform="rotate(2 546 820)" >Myrtle Ave</text>
<text x="675" y="826" font-size="13" fill="#36424f" text-anchor="start" stroke="#fff" stroke-width="3" stroke-linejoin="round" paint-order="stroke"  transform="rotate(3 675 826)" >Myrtle Ave</text>
<text x="675" y="826" font-size="13" fill="#36424f" stroke="#36424f" stroke-width=".4" text-anchor="start"  transform="rotate(3 675 826)" >Myrtle Ave</text>
<text x="838" y="835" font-size="13" fill="#36424f" text-anchor="start" stroke="#fff" stroke-width="3" stroke-linejoin="round" paint-order="stroke"  transform="rotate(-4 838 835)" >Myrtle Ave</text>
<text x="838" y="835" font-size="13" fill="#36424f" stroke="#36424f" stroke-width=".4" text-anchor="start"  transform="rotate(-4 838 835)" >Myrtle Ave</text>
<text x="608" y="936" font-size="13" fill="#36424f" text-anchor="start" stroke="#fff" stroke-width="3" stroke-linejoin="round" paint-order="stroke"  >Dekalb Ave</text>
<text x="608" y="936" font-size="13" fill="#36424f" stroke="#36424f" stroke-width=".4" text-anchor="start"  >Dekalb Ave</text>
<text x="697" y="936" font-size="13" fill="#36424f" text-anchor="start" stroke="#fff" stroke-width="3" stroke-linejoin="round" paint-order="stroke"  >Dekalb Ave</text>
<text x="697" y="936" font-size="13" fill="#36424f" stroke="#36424f" stroke-width=".4" text-anchor="start"  >Dekalb Ave</text>
<text x="306" y="622" font-size="11.8" fill="#36424f" text-anchor="start" stroke="#fff" stroke-width="3" stroke-linejoin="round" paint-order="stroke"  transform="rotate(-72 306 622)" >Hicks St</text>
<text x="306" y="622" font-size="11.8" fill="#36424f" stroke="#36424f" stroke-width=".4" text-anchor="start"  transform="rotate(-72 306 622)" >Hicks St</text>
<text x="457" y="700" font-size="11.8" fill="#36424f" text-anchor="start" stroke="#fff" stroke-width="3" stroke-linejoin="round" paint-order="stroke"  transform="rotate(-90 457 700)" >Jay St</text>
<text x="457" y="700" font-size="11.8" fill="#36424f" stroke="#36424f" stroke-width=".4" text-anchor="start"  transform="rotate(-90 457 700)" >Jay St</text>
<text x="343" y="692" font-size="12" fill="#36424f" text-anchor="start" stroke="#fff" stroke-width="3" stroke-linejoin="round" paint-order="stroke"  transform="rotate(82 343 692)" >Cadman Plz W</text>
<text x="343" y="692" font-size="12" fill="#36424f" stroke="#36424f" stroke-width=".4" text-anchor="start"  transform="rotate(82 343 692)" >Cadman Plz W</text>
<text x="319" y="758" font-size="11.8" fill="#36424f" text-anchor="start" stroke="#fff" stroke-width="3" stroke-linejoin="round" paint-order="stroke"  transform="rotate(-70 319 758)" >Monroe Pl</text>
<text x="319" y="758" font-size="11.8" fill="#36424f" stroke="#36424f" stroke-width=".4" text-anchor="start"  transform="rotate(-70 319 758)" >Monroe Pl</text>
<text x="333" y="790" font-size="11.8" fill="#36424f" text-anchor="start" stroke="#fff" stroke-width="3" stroke-linejoin="round" paint-order="stroke"  transform="rotate(-72 333 790)" >Clinton St</text>
<text x="333" y="790" font-size="11.8" fill="#36424f" stroke="#36424f" stroke-width=".4" text-anchor="start"  transform="rotate(-72 333 790)" >Clinton St</text>
<text x="426" y="872" font-size="12" fill="#36424f" text-anchor="start" stroke="#fff" stroke-width="3" stroke-linejoin="round" paint-order="stroke"  transform="rotate(30 426 872)" >Fulton St</text>
<text x="426" y="872" font-size="12" fill="#36424f" stroke="#36424f" stroke-width=".4" text-anchor="start"  transform="rotate(30 426 872)" >Fulton St</text>
<text x="397" y="922" font-size="12" fill="#36424f" text-anchor="start" stroke="#fff" stroke-width="3" stroke-linejoin="round" paint-order="stroke"  transform="rotate(24 397 922)" >Schermerhorn</text>
<text x="397" y="922" font-size="12" fill="#36424f" stroke="#36424f" stroke-width=".4" text-anchor="start"  transform="rotate(24 397 922)" >Schermerhorn</text>
<text x="517" y="892" font-size="11.8" fill="#36424f" text-anchor="start" stroke="#fff" stroke-width="3" stroke-linejoin="round" paint-order="stroke"  transform="rotate(-90 517 892)" >Duffield St</text>
<text x="517" y="892" font-size="11.8" fill="#36424f" stroke="#36424f" stroke-width=".4" text-anchor="start"  transform="rotate(-90 517 892)" >Duffield St</text>
<text x="562" y="800" font-size="11.8" fill="#36424f" text-anchor="start" stroke="#fff" stroke-width="3" stroke-linejoin="round" paint-order="stroke"  transform="rotate(-90 562 800)" >Prince St</text>
<text x="562" y="800" font-size="11.8" fill="#36424f" stroke="#36424f" stroke-width=".4" text-anchor="start"  transform="rotate(-90 562 800)" >Prince St</text>
<text x="578" y="862" font-size="11.8" fill="#36424f" text-anchor="start" stroke="#fff" stroke-width="3" stroke-linejoin="round" paint-order="stroke"  transform="rotate(-90 578 862)" >Fleet Pl</text>
<text x="578" y="862" font-size="11.8" fill="#36424f" stroke="#36424f" stroke-width=".4" text-anchor="start"  transform="rotate(-90 578 862)" >Fleet Pl</text>
<text x="606" y="775" font-size="12" fill="#36424f" text-anchor="start" stroke="#fff" stroke-width="3" stroke-linejoin="round" paint-order="stroke"  transform="rotate(62 606 775)" >Navy St</text>
<text x="606" y="775" font-size="12" fill="#36424f" stroke="#36424f" stroke-width=".4" text-anchor="start"  transform="rotate(62 606 775)" >Navy St</text>
<text x="764" y="755" font-size="11.8" fill="#36424f" text-anchor="start" stroke="#fff" stroke-width="3" stroke-linejoin="round" paint-order="stroke"  transform="rotate(82 764 755)" >Carlton Ave</text>
<text x="764" y="755" font-size="11.8" fill="#36424f" stroke="#36424f" stroke-width=".4" text-anchor="start"  transform="rotate(82 764 755)" >Carlton Ave</text>
<text x="780" y="837" font-size="11.8" fill="#36424f" text-anchor="start" stroke="#fff" stroke-width="3" stroke-linejoin="round" paint-order="stroke"  transform="rotate(82 780 837)" >Carlton Ave</text>
<text x="780" y="837" font-size="11.8" fill="#36424f" stroke="#36424f" stroke-width=".4" text-anchor="start"  transform="rotate(82 780 837)" >Carlton Ave</text>
<text x="803" y="839" font-size="11.8" fill="#36424f" text-anchor="start" stroke="#fff" stroke-width="3" stroke-linejoin="round" paint-order="stroke"  transform="rotate(82 803 839)" >Adelphi St</text>
<text x="803" y="839" font-size="11.8" fill="#36424f" stroke="#36424f" stroke-width=".4" text-anchor="start"  transform="rotate(82 803 839)" >Adelphi St</text>
<text x="826" y="839" font-size="11.8" fill="#36424f" text-anchor="start" stroke="#fff" stroke-width="3" stroke-linejoin="round" paint-order="stroke"  transform="rotate(82 826 839)" >Clermont Ave</text>
<text x="826" y="839" font-size="11.8" fill="#36424f" stroke="#36424f" stroke-width=".4" text-anchor="start"  transform="rotate(82 826 839)" >Clermont Ave</text>
<text x="921" y="700" font-size="11.8" fill="#36424f" text-anchor="start" stroke="#fff" stroke-width="3" stroke-linejoin="round" paint-order="stroke"  transform="rotate(80 921 700)" >Hall St</text>
<text x="921" y="700" font-size="11.8" fill="#36424f" stroke="#36424f" stroke-width=".4" text-anchor="start"  transform="rotate(80 921 700)" >Hall St</text>
<text x="948" y="885" font-size="11.8" fill="#36424f" text-anchor="start" stroke="#fff" stroke-width="3" stroke-linejoin="round" paint-order="stroke"  transform="rotate(80 948 885)" >Hall St</text>
<text x="948" y="885" font-size="11.8" fill="#36424f" stroke="#36424f" stroke-width=".4" text-anchor="start"  transform="rotate(80 948 885)" >Hall St</text>
<text x="330" y="566" font-size="12" fill="#36424f" text-anchor="start" stroke="#fff" stroke-width="3" stroke-linejoin="round" paint-order="stroke"  transform="rotate(55 330 566)" >lyn Brg</text>
<text x="330" y="566" font-size="12" fill="#36424f" stroke="#36424f" stroke-width=".4" text-anchor="start"  transform="rotate(55 330 566)" >lyn Brg</text>
<text x="541" y="576" font-size="11.8" fill="#36424f" text-anchor="start" stroke="#fff" stroke-width="3" stroke-linejoin="round" paint-order="stroke"  transform="rotate(-90 541 576)" >Go</text>
<text x="541" y="576" font-size="11.8" fill="#36424f" stroke="#36424f" stroke-width=".4" text-anchor="start"  transform="rotate(-90 541 576)" >Go</text>
<text x="551" y="572" font-size="11.8" fill="#36424f" text-anchor="start" stroke="#fff" stroke-width="3" stroke-linejoin="round" paint-order="stroke"  transform="rotate(-90 551 572)" >B</text>
<text x="551" y="572" font-size="11.8" fill="#36424f" stroke="#36424f" stroke-width=".4" text-anchor="start"  transform="rotate(-90 551 572)" >B</text>
<text x="584" y="560" font-size="11.8" fill="#36424f" text-anchor="start" stroke="#fff" stroke-width="3" stroke-linejoin="round" paint-order="stroke"  transform="rotate(62 584 560)" >Ave</text>
<text x="584" y="560" font-size="11.8" fill="#36424f" stroke="#36424f" stroke-width=".4" text-anchor="start"  transform="rotate(62 584 560)" >Ave</text>
<text x="292" y="505" font-size="12" fill="#36424f" text-anchor="start" stroke="#fff" stroke-width="3" stroke-linejoin="round" paint-order="stroke"  >JL</text>
<text x="292" y="505" font-size="12" fill="#36424f" stroke="#36424f" stroke-width=".4" text-anchor="start"  >JL</text>
<text x="604" y="509" font-size="12" fill="#36424f" text-anchor="start" stroke="#fff" stroke-width="3" stroke-linejoin="round" paint-order="stroke"  >L</text>
<text x="604" y="509" font-size="12" fill="#36424f" stroke="#36424f" stroke-width=".4" text-anchor="start"  >L</text>
<text x="292" y="699" font-size="13" fill="#36424f" text-anchor="start" stroke="#fff" stroke-width="3" stroke-linejoin="round" paint-order="stroke"  >t</text>
<text x="292" y="699" font-size="13" fill="#36424f" stroke="#36424f" stroke-width=".4" text-anchor="start"  >t</text>
<text x="292" y="775" font-size="11.8" fill="#36424f" text-anchor="start" stroke="#fff" stroke-width="3" stroke-linejoin="round" paint-order="stroke"  transform="rotate(15 292 775)" >St</text>
<text x="292" y="775" font-size="11.8" fill="#36424f" stroke="#36424f" stroke-width=".4" text-anchor="start"  transform="rotate(15 292 775)" >St</text>
<text x="509" y="737.5" font-size="11.2" fill="#36424f" text-anchor="middle" stroke="#fff" stroke-width="3" stroke-linejoin="round" paint-order="stroke"  font-weight="700" letter-spacing="1.75">DOWNTOWN</text>
<text x="509" y="750.5" font-size="11.2" fill="#36424f" text-anchor="middle" stroke="#fff" stroke-width="3" stroke-linejoin="round" paint-order="stroke"  font-weight="700" letter-spacing="1.75">BROOKLYN</text>
<text x="811" y="641.5" font-size="11.2" fill="#36424f" text-anchor="middle" stroke="#fff" stroke-width="3" stroke-linejoin="round" paint-order="stroke"  font-weight="700" letter-spacing="2">BROOKLYN</text>
<text x="811" y="654.5" font-size="11.2" fill="#36424f" text-anchor="middle" stroke="#fff" stroke-width="3" stroke-linejoin="round" paint-order="stroke"  font-weight="700" letter-spacing="2">NAVY YARD</text>
<text x="890" y="937.5" font-size="11.2" fill="#36424f" text-anchor="start" stroke="#fff" stroke-width="3" stroke-linejoin="round" paint-order="stroke"  font-weight="700" letter-spacing="2.6">CLINTON H</text>
<text x="579" y="594" font-size="13.8" fill="#5d6b73" text-anchor="start" stroke="#fff" stroke-width="3" stroke-linejoin="round" paint-order="stroke"  >Farragut Houses</text>
<text x="579" y="607" font-size="13.8" fill="#5d6b73" text-anchor="start" stroke="#fff" stroke-width="3" stroke-linejoin="round" paint-order="stroke"  >(NYCHA)</text>
<text x="722" y="646" font-size="13.8" fill="#5d6b73" text-anchor="end" stroke="#fff" stroke-width="3" stroke-linejoin="round" paint-order="stroke"  >Newlab</text>
<text x="807" y="590" font-size="13.8" fill="#5d6b73" text-anchor="start" stroke="#fff" stroke-width="3" stroke-linejoin="round" paint-order="stroke"  >Steiner Studios</text>
<text x="912" y="511" font-size="13.8" fill="#5d6b73" text-anchor="start" stroke="#fff" stroke-width="3" stroke-linejoin="round" paint-order="stroke"  >Bedford</text>
<text x="912" y="876" font-size="13.8" fill="#5d6b73" text-anchor="start" stroke="#fff" stroke-width="3" stroke-linejoin="round" paint-order="stroke"  >Pratt Inst</text>
<text x="716" y="520" font-size="13.8" fill="#8a55e0" text-anchor="start" stroke="#fff" stroke-width="3" stroke-linejoin="round" paint-order="stroke"  >Brooklyn Storehouse</text>
<text x="448" y="916" font-size="13.8" fill="#8a55e0" text-anchor="start" stroke="#fff" stroke-width="3" stroke-linejoin="round" paint-order="stroke"  >Brooklyn Paramount</text>
<text x="306" y="894" font-size="13.8" fill="#8a55e0" text-anchor="start" stroke="#fff" stroke-width="3" stroke-linejoin="round" paint-order="stroke"  >New York</text>
<text x="292" y="908" font-size="13.8" fill="#8a55e0" text-anchor="start" stroke="#fff" stroke-width="3" stroke-linejoin="round" paint-order="stroke"  >si</text>
<text x="345" y="908" font-size="13.8" fill="#8a55e0" text-anchor="start" stroke="#fff" stroke-width="3" stroke-linejoin="round" paint-order="stroke"  >um</text>
<text x="292" y="473" font-size="13.8" fill="#8a55e0" text-anchor="start" stroke="#fff" stroke-width="3" stroke-linejoin="round" paint-order="stroke"  >sel</text>
<text x="615" y="645" font-size="13.8" fill="#1a78dc" text-anchor="end" stroke="#fff" stroke-width="3" stroke-linejoin="round" paint-order="stroke"  >Wegmans</text>
<text x="566" y="881" font-size="13.8" fill="#1a78dc" text-anchor="start" stroke="#fff" stroke-width="3" stroke-linejoin="round" paint-order="stroke"  >Trader Joe's</text>
<text x="880" y="677" font-size="13.8" fill="#e2730f" text-anchor="end" stroke="#fff" stroke-width="3" stroke-linejoin="round" paint-order="stroke"  >Brooklyn Roasting</text>
<text x="880" y="691" font-size="13.8" fill="#e2730f" text-anchor="end" stroke="#fff" stroke-width="3" stroke-linejoin="round" paint-order="stroke"  >Company</text>
<text x="808" y="934" font-size="13.8" fill="#e2730f" text-anchor="start" stroke="#fff" stroke-width="3" stroke-linejoin="round" paint-order="stroke"  >Miss Ada</text>
<text x="640" y="702" font-size="13.8" fill="#1c8a5e" text-anchor="middle" stroke="#fff" stroke-width="3" stroke-linejoin="round" paint-order="stroke"  >Commodore</text>
<text x="640" y="716" font-size="13.8" fill="#1c8a5e" text-anchor="middle" stroke="#fff" stroke-width="3" stroke-linejoin="round" paint-order="stroke"  >Barry Park</text>
<text x="726" y="882" font-size="13.8" fill="#1c8a5e" text-anchor="middle" stroke="#fff" stroke-width="3" stroke-linejoin="round" paint-order="stroke"  >Fort Greene</text>
<text x="726" y="897" font-size="13.8" fill="#1c8a5e" text-anchor="middle" stroke="#fff" stroke-width="3" stroke-linejoin="round" paint-order="stroke"  >Park</text>
<text x="948" y="648" font-size="13.8" fill="#1c8a5e" text-anchor="start" stroke="#fff" stroke-width="3" stroke-linejoin="round" paint-order="stroke"  >Co</text>
<text x="945" y="662" font-size="13.8" fill="#1c8a5e" text-anchor="start" stroke="#fff" stroke-width="3" stroke-linejoin="round" paint-order="stroke"  >La</text>
<text x="733" y="472" font-size="11.5" fill="#2f8fa6" text-anchor="start"  transform="rotate(38 733 472)" >ut Bay</text>
<g transform="translate(676 515)">
<path d="M0,16.4 Q-1.2,16.4 -2.4,15 L-6.6,10 A12,12 0 1 1 6.6,10 L2.4,15 Q1.2,16.4 0,16.4 Z" fill="#fff" stroke="#c9c9c9" stroke-width=".7"/>
<circle cx="0" cy="0" r="10.2" fill="#a86af5"/>
<g transform="scale(1.15)"><path d="M-4,4.5 V-1 H-1.2 V-4.5 H1.2 V-1 H4 V4.5 H1.5 V1 H-1.5 V4.5 Z" fill="#fff"/><rect x="-.6" y="-6" width="1.2" height="2" fill="#fff"/></g>
</g>
<g transform="translate(859 514)">
<path d="M0,16.4 Q-1.2,16.4 -2.4,15 L-6.6,10 A12,12 0 1 1 6.6,10 L2.4,15 Q1.2,16.4 0,16.4 Z" fill="#fff" stroke="#c9c9c9" stroke-width=".7"/>
<circle cx="0" cy="0" r="10.2" fill="#a86af5"/>
<g transform="scale(1.15)"><path d="M-4,4.5 V-1 H-1.2 V-4.5 H1.2 V-1 H4 V4.5 H1.5 V1 H-1.5 V4.5 Z" fill="#fff"/><rect x="-.6" y="-6" width="1.2" height="2" fill="#fff"/></g>
</g>
<g transform="translate(326 463.5)">
<path d="M0,16.4 Q-1.2,16.4 -2.4,15 L-6.6,10 A12,12 0 1 1 6.6,10 L2.4,15 Q1.2,16.4 0,16.4 Z" fill="#fff" stroke="#c9c9c9" stroke-width=".7"/>
<circle cx="0" cy="0" r="10.2" fill="#a86af5"/>
<g transform="scale(1.15)"><path d="M-4,4.5 V-1 H-1.2 V-4.5 H1.2 V-1 H4 V4.5 H1.5 V1 H-1.5 V4.5 Z" fill="#fff"/><rect x="-.6" y="-6" width="1.2" height="2" fill="#fff"/></g>
</g>
<g transform="translate(564 594)">
<path d="M0,16.4 Q-1.2,16.4 -2.4,15 L-6.6,10 A12,12 0 1 1 6.6,10 L2.4,15 Q1.2,16.4 0,16.4 Z" fill="#fff" stroke="#c9c9c9" stroke-width=".7"/>
<circle cx="0" cy="0" r="10.2" fill="#78909c"/>
<g transform="scale(1.15)"><circle cx="0" cy="0" r="3.4" fill="#fff"/></g>
</g>
<g transform="translate(737 638)">
<path d="M0,16.4 Q-1.2,16.4 -2.4,15 L-6.6,10 A12,12 0 1 1 6.6,10 L2.4,15 Q1.2,16.4 0,16.4 Z" fill="#fff" stroke="#c9c9c9" stroke-width=".7"/>
<circle cx="0" cy="0" r="10.2" fill="#78909c"/>
<g transform="scale(1.15)"><circle cx="0" cy="0" r="3.4" fill="#fff"/></g>
</g>
<g transform="translate(916 583)">
<path d="M0,16.4 Q-1.2,16.4 -2.4,15 L-6.6,10 A12,12 0 1 1 6.6,10 L2.4,15 Q1.2,16.4 0,16.4 Z" fill="#fff" stroke="#c9c9c9" stroke-width=".7"/>
<circle cx="0" cy="0" r="10.2" fill="#78909c"/>
<g transform="scale(1.15)"><circle cx="0" cy="0" r="3.4" fill="#fff"/></g>
</g>
<g transform="translate(629 637)">
<path d="M0,16.4 Q-1.2,16.4 -2.4,15 L-6.6,10 A12,12 0 1 1 6.6,10 L2.4,15 Q1.2,16.4 0,16.4 Z" fill="#fff" stroke="#c9c9c9" stroke-width=".7"/>
<circle cx="0" cy="0" r="10.2" fill="#1a96f0"/>
<g transform="scale(1.15)"><path d="M-5.5,-4.5 H-3.8 L-2.6,1.2 H3.4 L4.6,-2.8 H-3.2" fill="none" stroke="#fff" stroke-width="1.3"/><path d="M-3,-2.6 H4.4 L3.3,1 H-2.5Z" fill="#fff"/><circle cx="-2" cy="3.4" r="1.1" fill="#fff"/><circle cx="2.8" cy="3.4" r="1.1" fill="#fff"/></g>
</g>
<g transform="translate(550 874)">
<path d="M0,16.4 Q-1.2,16.4 -2.4,15 L-6.6,10 A12,12 0 1 1 6.6,10 L2.4,15 Q1.2,16.4 0,16.4 Z" fill="#fff" stroke="#c9c9c9" stroke-width=".7"/>
<circle cx="0" cy="0" r="10.2" fill="#1a96f0"/>
<g transform="scale(1.15)"><path d="M-5.5,-4.5 H-3.8 L-2.6,1.2 H3.4 L4.6,-2.8 H-3.2" fill="none" stroke="#fff" stroke-width="1.3"/><path d="M-3,-2.6 H4.4 L3.3,1 H-2.5Z" fill="#fff"/><circle cx="-2" cy="3.4" r="1.1" fill="#fff"/><circle cx="2.8" cy="3.4" r="1.1" fill="#fff"/></g>
</g>
<g transform="translate(895 677)">
<path d="M0,16.4 Q-1.2,16.4 -2.4,15 L-6.6,10 A12,12 0 1 1 6.6,10 L2.4,15 Q1.2,16.4 0,16.4 Z" fill="#fff" stroke="#c9c9c9" stroke-width=".7"/>
<circle cx="0" cy="0" r="10.2" fill="#f5822a"/>
<g transform="scale(1.15)"><path d="M-4,-3.5 H2.5 V1 A2.5,2.5 0 0 1 0,3 H-1.5 A2.5,2.5 0 0 1 -4,1 Z" fill="#fff"/><path d="M2.5,-2.5 H4 A1.3,1.3 0 0 1 4,0.3 H2.5" fill="none" stroke="#fff" stroke-width="1"/><rect x="-4.5" y="4" width="8" height="1" fill="#fff"/></g>
</g>
<g transform="translate(792 925)">
<path d="M0,16.4 Q-1.2,16.4 -2.4,15 L-6.6,10 A12,12 0 1 1 6.6,10 L2.4,15 Q1.2,16.4 0,16.4 Z" fill="#fff" stroke="#c9c9c9" stroke-width=".7"/>
<circle cx="0" cy="0" r="10.2" fill="#f5822a"/>
<g transform="scale(1.15)"><path d="M-3.6,-5 V-1.6 A1.3,1.3 0 0 0 -2.3,-.3 V5 M-2.3,-5 V-.3 M-1,-5 V-1.6 A1.3,1.3 0 0 1 -2.3,-.3" fill="none" stroke="#fff" stroke-width="1"/><path d="M1.5,5 V-5 Q4,-4 4,-0.5 L2.6,0.6 V5 Z" fill="#fff"/></g>
</g>
<g transform="translate(380 894)">
<path d="M0,16.4 Q-1.2,16.4 -2.4,15 L-6.6,10 A12,12 0 1 1 6.6,10 L2.4,15 Q1.2,16.4 0,16.4 Z" fill="#fff" stroke="#c9c9c9" stroke-width=".7"/>
<circle cx="0" cy="0" r="10.2" fill="#a86af5"/>
<g transform="scale(1.15)"><path d="M-5,-1.8 L0,-5 L5,-1.8 Z" fill="#fff"/><path d="M-4.2,-0.8 H4.2 V4.5 H-4.2 Z M-2.6,0.6 V3.2 H-1.4 V0.6 Z M-0.6,0.6 V3.2 H0.6 V0.6 Z M1.4,0.6 V3.2 H2.6 V0.6 Z" fill="#fff" fill-rule="evenodd"/></g>
</g>
<g transform="translate(590 908)">
<path d="M0,16.4 Q-1.2,16.4 -2.4,15 L-6.6,10 A12,12 0 1 1 6.6,10 L2.4,15 Q1.2,16.4 0,16.4 Z" fill="#fff" stroke="#c9c9c9" stroke-width=".7"/>
<circle cx="0" cy="0" r="10.2" fill="#a86af5"/>
<g transform="scale(1.15)"><path d="M-6,-2.8 L-4.8,-1.5 H-2.2 L-1,-2.8 V1.5 A2.5,2.5 0 0 1 -6,1.5 Z" fill="#fff"/><path d="M0,-4.6 L1.2,-3.3 H3.8 L5,-4.6 V-.3 A2.5,2.5 0 0 1 0,-.3 Z" fill="#fff" stroke="#8a55e0" stroke-width=".7"/></g>
</g>
<circle cx="766" cy="570" r="7.5" fill="#fff"/><circle cx="766" cy="570" r="6.3" fill="#455a64"/><path d="M763,568 h6 v2.5 h-6z M764.3,566 h3.4 v1.4 h-3.4z M762.3,571.5 h7.4 l-1,2 h-5.4z" fill="#fff"/>
<circle cx="461" cy="577" r="6.2" fill="#fff"/><circle cx="461" cy="577" r="5.4" fill="#0b3aa8"/>
<text x="461" y="579" font-size="5.5" font-weight="700" fill="#fff" text-anchor="middle" letter-spacing="-.4">MTA</text>
<circle cx="386" cy="640" r="6.2" fill="#fff"/><circle cx="386" cy="640" r="5.4" fill="#0b3aa8"/>
<text x="386" y="642" font-size="5.5" font-weight="700" fill="#fff" text-anchor="middle" letter-spacing="-.4">MTA</text>
<circle cx="306" cy="694" r="6.2" fill="#fff"/><circle cx="306" cy="694" r="5.4" fill="#0b3aa8"/>
<text x="306" y="696" font-size="5.5" font-weight="700" fill="#fff" text-anchor="middle" letter-spacing="-.4">MTA</text>
<circle cx="349" cy="802" r="6.2" fill="#fff"/><circle cx="349" cy="802" r="5.4" fill="#0b3aa8"/>
<text x="349" y="804" font-size="5.5" font-weight="700" fill="#fff" text-anchor="middle" letter-spacing="-.4">MTA</text>
<circle cx="371" cy="810" r="6.2" fill="#fff"/><circle cx="371" cy="810" r="5.4" fill="#0b3aa8"/>
<text x="371" y="812" font-size="5.5" font-weight="700" fill="#fff" text-anchor="middle" letter-spacing="-.4">MTA</text>
<circle cx="446" cy="845" r="6.2" fill="#fff"/><circle cx="446" cy="845" r="5.4" fill="#0b3aa8"/>
<text x="446" y="847" font-size="5.5" font-weight="700" fill="#fff" text-anchor="middle" letter-spacing="-.4">MTA</text>
<circle cx="484" cy="860" r="6.2" fill="#fff"/><circle cx="484" cy="860" r="5.4" fill="#0b3aa8"/>
<text x="484" y="862" font-size="5.5" font-weight="700" fill="#fff" text-anchor="middle" letter-spacing="-.4">MTA</text>
<g transform="translate(423 580) scale(1.32)">
<path d="M-7.5,-6.5 Q0,-8.5 7.5,-6.5 Q9,0 4,5.5 Q1.5,7.5 0,8 Q-1.5,7.5 -4,5.5 Q-9,0 -7.5,-6.5Z" fill="#3a6fd0" stroke="#fff" stroke-width="1.2"/>
<path d="M-7.4,-6.4 Q0,-8.4 7.4,-6.4 L7.7,-3.6 H-7.7Z" fill="#e05a55"/>
<text x="0" y="3.6" font-size="7.5" font-weight="700" fill="#fff" text-anchor="middle">278</text>
</g>
<g transform="translate(656 734) scale(1.32)">
<path d="M-7.5,-6.5 Q0,-8.5 7.5,-6.5 Q9,0 4,5.5 Q1.5,7.5 0,8 Q-1.5,7.5 -4,5.5 Q-9,0 -7.5,-6.5Z" fill="#3a6fd0" stroke="#fff" stroke-width="1.2"/>
<path d="M-7.4,-6.4 Q0,-8.4 7.4,-6.4 L7.7,-3.6 H-7.7Z" fill="#e05a55"/>
<text x="0" y="3.6" font-size="7.5" font-weight="700" fill="#fff" text-anchor="middle">278</text>
</g>
<path d="M-3,0 H3 M1,-2 L3,0 L1,2" transform="translate(420 596) rotate(0)" fill="none" stroke="#6b7680" stroke-width="1"/>
<path d="M-3,0 H3 M1,-2 L3,0 L1,2" transform="translate(460 643) rotate(-110)" fill="none" stroke="#6b7680" stroke-width="1"/>
<path d="M-3,0 H3 M1,-2 L3,0 L1,2" transform="translate(527 668) rotate(180)" fill="none" stroke="#6b7680" stroke-width="1"/>
<path d="M-3,0 H3 M1,-2 L3,0 L1,2" transform="translate(556 770) rotate(90)" fill="none" stroke="#6b7680" stroke-width="1"/>
<path d="M-3,0 H3 M1,-2 L3,0 L1,2" transform="translate(360 865) rotate(100)" fill="none" stroke="#6b7680" stroke-width="1"/>
<path d="M-3,0 H3 M1,-2 L3,0 L1,2" transform="translate(415 904) rotate(200)" fill="none" stroke="#6b7680" stroke-width="1"/>
<rect x="301" y="474" width="301" height="85.5" rx="2" fill="#fff" filter="url(#sh)"/>
<defs><filter id="sh" x="-10%" y="-10%" width="120%" height="130%"><feDropShadow dx="0" dy="1" stdDeviation="1.5" flood-color="#000" flood-opacity=".28"/></filter></defs>
<text x="313.4" y="501.5" font-size="14" fill="#202124" stroke="#202124" stroke-width=".55">New York</text>
<text x="313" y="520" font-size="12" fill="#5f6368">New York, NY, USA</text>
<text x="313" y="544" font-size="12" fill="#5f6368">No reviews</text>
<circle cx="524" cy="503" r="16.5" fill="#f1f3f4"/><circle cx="573.5" cy="503" r="16.5" fill="#f1f3f4"/>
<path d="M523,496.5 H517.5 V509.5 H530.5 V504 M525.5,496 H531 V501.5 M531,496 L523,504" fill="none" stroke="#1a73e8" stroke-width="1.8"/>
<path d="M573.5,494 L582.5,503 L573.5,512 L564.5,503 Z" fill="#1a73e8" stroke="#1a73e8" stroke-width="1.5" stroke-linejoin="round"/>
<path d="M570.5,506.5 V503 Q570.5,502 571.5,502 H576.5 M574.8,499.8 L577,502 L574.8,504.2" fill="none" stroke="#fff" stroke-width="1.4"/>
<rect x="303" y="894" width="42" height="42" rx="3" fill="#fff" filter="url(#sh)"/>
<defs><filter id="sat" x="0" y="0" width="100%" height="100%" color-interpolation-filters="sRGB"><feTurbulence type="fractalNoise" baseFrequency=".45" numOctaves="3" seed="7"/><feColorMatrix type="matrix" values=".95 0 0 0 -.1  .9 0 0 0 -.09  .8 0 0 0 -.09  0 0 0 0 1"/><feGaussianBlur stdDeviation=".35"/></filter></defs>
<rect x="305" y="896" width="38" height="38" rx="2" fill="#6b6a58" filter="url(#sat)"/>
<polygon points="305.0,896.0 343.0,896.0 343.0,899.0 334.0,903.0 326.0,900.0 305.0,902.0" fill="#18241a" fill-opacity=".75"/>
<circle cx="930" cy="903" r="19.5" fill="#fff" filter="url(#sh)"/>
<path d="M926,896.5 L930,892.5 L934,896.5 M926,909.5 L930,913.5 L934,909.5 M923.5,899 L919.5,903 L923.5,907 M936.5,899 L940.5,903 L936.5,907" fill="none" stroke="#666" stroke-width="2.2"/>
<text x="603" y="926" font-size="14.5" fill="#4285f4" stroke="#fff" stroke-width="2" paint-order="stroke" stroke-linejoin="round">G</text>
<text x="614.3" y="926" font-size="14.5" fill="#ea4335" stroke="#fff" stroke-width="2" paint-order="stroke" stroke-linejoin="round">o</text>
<text x="622.2" y="926" font-size="14.5" fill="#fbbc05" stroke="#fff" stroke-width="2" paint-order="stroke" stroke-linejoin="round">o</text>
<text x="630.1" y="926" font-size="14.5" fill="#4285f4" stroke="#fff" stroke-width="2" paint-order="stroke" stroke-linejoin="round">g</text>
<text x="638" y="926" font-size="14.5" fill="#34a853" stroke="#fff" stroke-width="2" paint-order="stroke" stroke-linejoin="round">l</text>
<text x="641.4" y="926" font-size="14.5" fill="#ea4335" stroke="#fff" stroke-width="2" paint-order="stroke" stroke-linejoin="round">e</text>
<rect x="607" y="933" width="353" height="14" fill="#f5f5f5" fill-opacity=".78"/>
<text x="611" y="943" font-size="10" fill="#111" id="at611">Keyboard shortcuts</text>
<text x="710" y="943" font-size="10" fill="#111" id="at710">Map data ©2026 Google</text>
<text x="831" y="943" font-size="10" fill="#111" id="at831">Terms</text>
<text x="871" y="943" font-size="10" fill="#111" id="at871">Report a map error</text>
</svg>
</div>

<div id="form">
  <h2 style="letter-spacing:-.44px">Send a Message</h2>
  <div class="inp" style="left:992px;top:550px;width:291px;letter-spacing:.25px">First Name</div>
  <div class="inp" style="left:1304px;top:550px;width:291px;letter-spacing:.1px">Last Name</div>
  <div class="inp" style="left:992px;top:610px;width:603px;letter-spacing:.19px">Email Address</div>
  <div class="abs" id="plabel" style="left:992px;top:673px;letter-spacing:.2px;font-size:14px;line-height:20px;color:#111">Phone Number (Optional)</div>
  <div class="inp" style="left:992px;top:694px;width:603px;letter-spacing:.36px">Phone Number (Optional)</div>
  <div class="abs" id="phelp" style="left:992px;top:739px;font-size:12px;line-height:16px;letter-spacing:.13px;color:#6b7280">Format: +[country code][phone number]</div>
  <div class="inp" style="left:992px;top:770px;width:603px;height:84px;line-height:42px;letter-spacing:.17px">Your Message</div>
  <div class="abs" id="send" style="left:992px;top:875px;width:603px;height:40px;background:#684c2e;border-radius:6px;color:#fff;font-size:14px;line-height:39px;text-align:center;letter-spacing:-.17px">Send Message</div>
</div>

<div id="footer"></div>
</body>
</html>
